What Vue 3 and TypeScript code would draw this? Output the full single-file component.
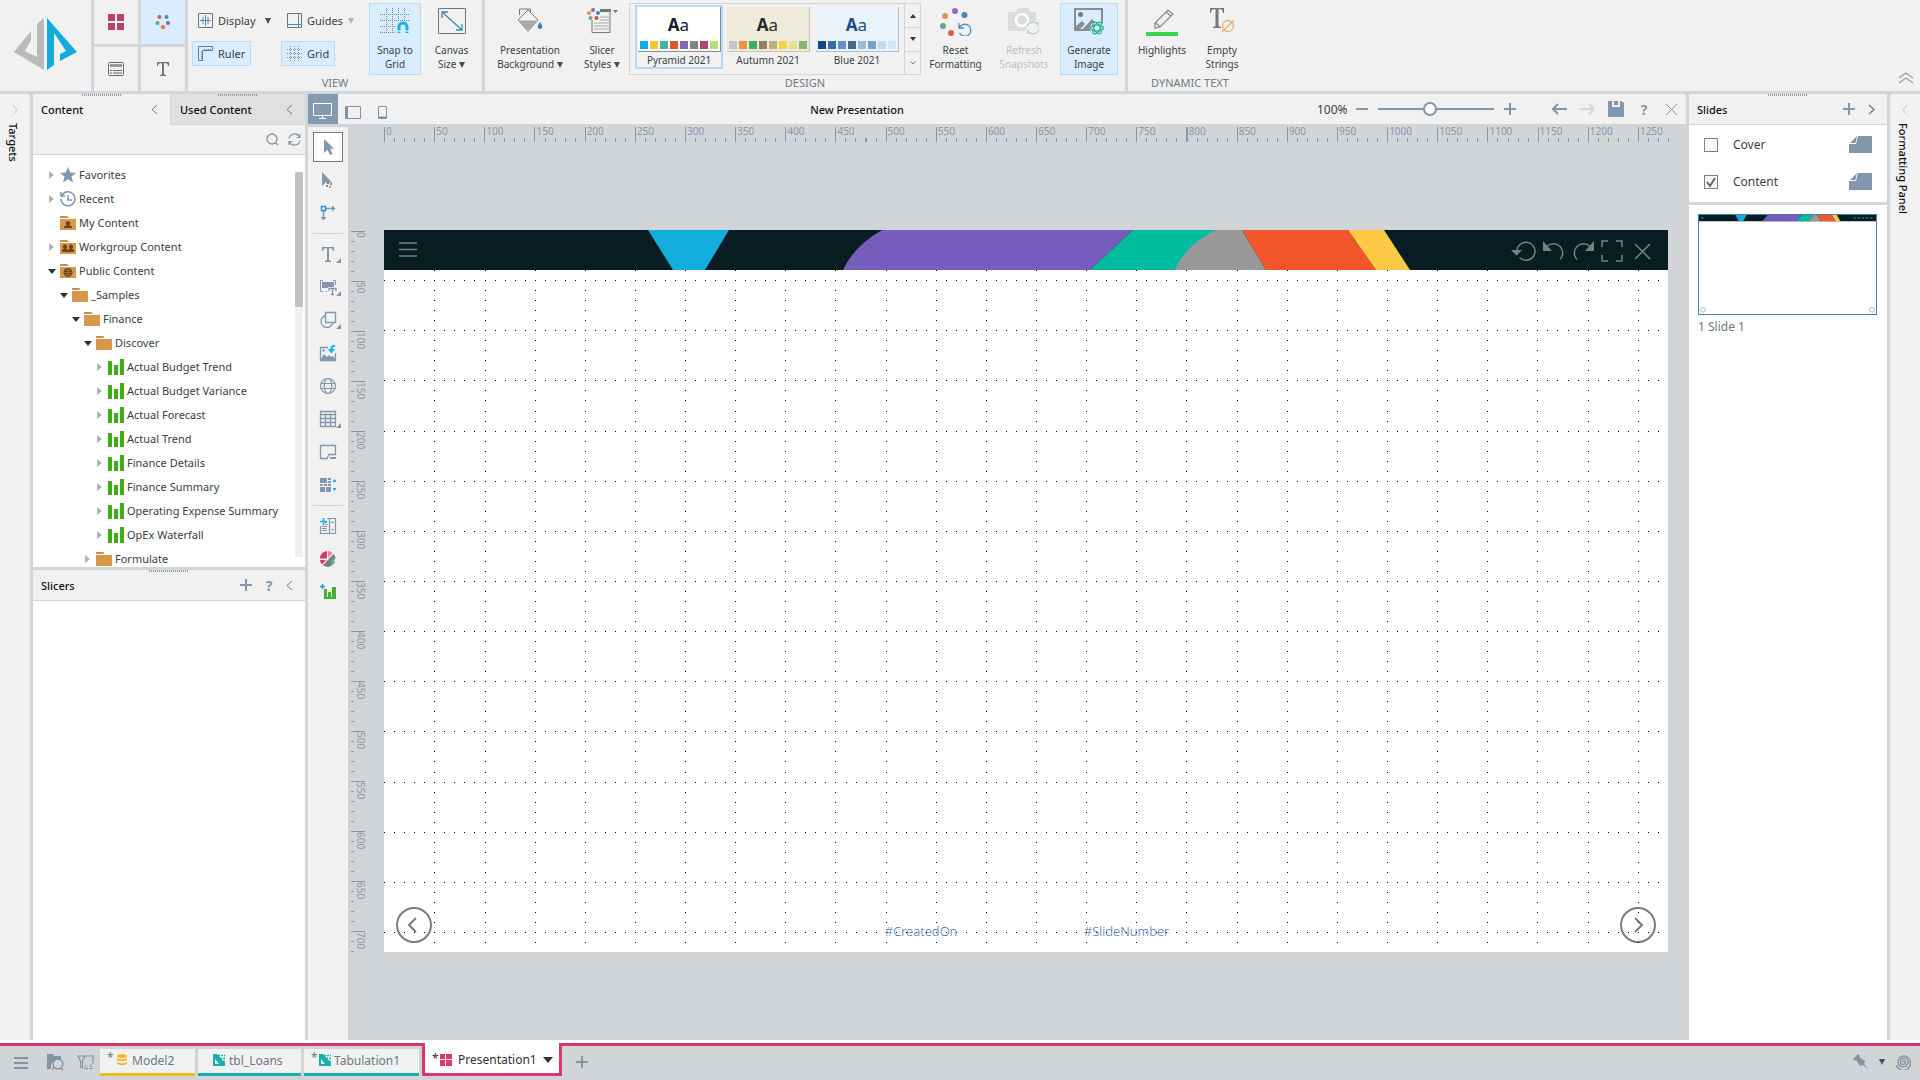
<script setup lang="ts">
import { ref } from 'vue'

interface TreeNode { label: string; level: number; icon: string; state: 'expanded' | 'closed' | 'leaf' }
interface Theme { name: string; kind: string; colors: string[] }

const folder = '<path d="M0 1h7l2 2H0z" fill="#c78f4b"/><path d="M0 4h16v11H0z" fill="#d6994b"/>'
const icons: Record<string, string> = {
  star: '<path d="M8 0l2.200 5.600 5.800.300-4.500 3.700L13 15.500 8 12.300 3 15.500l1.500-5.900L0 5.900l5.800-.300z" fill="#8297ab"/>',
  recent: '<path d="M2 4.200A7 7 0 1 1 1 8M1 1v4h4M8 4v5h4" fill="none" stroke="#8297ab" stroke-width="1.500"/>',
  folder,
  mine: folder + '<path d="M8 6a2.200 2.200 0 0 1 1.200 4.100l2.800 1.400V13H4v-1.500l2.800-1.400A2.200 2.200 0 0 1 8 6z" fill="#70441c"/>',
  group: folder + '<path d="M5 5.500a2 2 0 0 1 1 3.800L8 11l2-1.700a2 2 0 1 1 2 0l2 1.800V13H2v-1.900l2-1.800a2 2 0 0 1 1-3.800z" fill="#70441c"/>',
  public: folder + '<circle cx="8" cy="9.500" r="4.500" fill="#70441c"/><path d="M3.500 9.500h9M8 5v9M4.500 7h7M4.500 12h7" stroke="#b07a3a" stroke-width=".7"/>',
  bars: '<path d="M0 2h4v14H0zM6 6h4v10H6zM12 0h4v16h-4z" fill="#3fae14"/>',
}

const tree: TreeNode[] = [
  { label: 'Favorites', level: 0, icon: 'star', state: 'closed' },
  { label: 'Recent', level: 0, icon: 'recent', state: 'closed' },
  { label: 'My Content', level: 0, icon: 'mine', state: 'leaf' },
  { label: 'Workgroup Content', level: 0, icon: 'group', state: 'closed' },
  { label: 'Public Content', level: 0, icon: 'public', state: 'expanded' },
  { label: '_Samples', level: 1, icon: 'folder', state: 'expanded' },
  { label: 'Finance', level: 2, icon: 'folder', state: 'expanded' },
  { label: 'Discover', level: 3, icon: 'folder', state: 'expanded' },
  ...['Actual Budget Trend', 'Actual Budget Variance', 'Actual Forecast', 'Actual Trend', 'Finance Details',
    'Finance Summary', 'Operating Expense Summary', 'OpEx Waterfall'].map(
    (label): TreeNode => ({ label, level: 4, icon: 'bars', state: 'closed' })),
  { label: 'Formulate', level: 3, icon: 'folder', state: 'closed' },
]

const themes: Theme[] = [
  { name: 'Pyramid 2021', kind: 'plain', colors: ['#13afdb', '#f6c62d', '#3fb79b', '#e0552f', '#8069b8', '#838383', '#b3486f', '#b8dc7c'] },
  { name: 'Autumn 2021', kind: 'sand', colors: ['#c4c4c4', '#ef9140', '#34b557', '#8f8163', '#bdae7d', '#fdd23e', '#e8df97', '#85b86c'] },
  { name: 'Blue 2021', kind: 'sky', colors: ['#104a80', '#3571a8', '#6190c9', '#46698d', '#a1bada', '#72a5cd', '#c2d8eb', '#d3e5ef'] },
]

const corner = '<path d="M28 19v5h-5z" fill="#8297ab"/>'
const tools: { name: string; art: string; rule?: boolean }[] = [
  { name: 'Select', art: '<path d="M11 7v14l3.500-3.200L17 23l2.500-1-2.400-5.200H21z" fill="#8297ab"/>' },
  { name: 'Select content', art: '<path d="M9 7v14l3.500-3.500H19z" fill="#8297ab"/><path d="M14 17h2v2h-2z" fill="#d9534f"/><path d="M17 18h2v2h-2z" fill="#8297ab"/><path d="M13 20h2v2h-2z" fill="#20b598"/><path d="M16 21h2v2h-2z" fill="#d6994b"/>' },
  { name: 'Connector', rule: true, art: '<path d="M13 10.500h8M10.500 13v8" stroke="#8297ab" stroke-width="1.500"/><path d="M19 7.500l3.500 3-3.500 3zM7.500 19l3 3.500 3-3.500z" fill="#8297ab"/><path d="M8.500 8.500h4v4h-4z" fill="#fff" stroke="#2f8fc4" stroke-width="1.500"/>' },
  { name: 'Text', art: '<path d="M9 8h12v4h-1c-.2-2-.8-2.800-2.500-2.800H16V20c0 1.500.5 1.700 2 1.800V23h-6v-1.200c1.500 0 2-.3 2-1.800V9.200h-1.500C10.800 9.200 10.200 10 10 12H9z" fill="#8297ab"/>' + corner },
  { name: 'Dynamic text', art: '<path d="M10 8.500H7.500v11H10M20 8.500h2.500V13M14 19.500h-1" fill="none" stroke="#8297ab"/><path d="M9 10h12v5h-6v1H9z" fill="#8297ab"/><path d="M16 19v-2.500h7V19M19.500 16.500v6M18 22.500h3" fill="none" stroke="#8297ab" stroke-width="1.300"/>' + corner },
  { name: 'Shape', art: '<circle cx="14" cy="16.500" r="6" fill="none" stroke="#8297ab" stroke-width="1.300"/><path d="M12.500 7.500h10v10h-10z" fill="#f1f1f1" stroke="#8297ab" stroke-width="1.300"/>' + corner },
  { name: 'Image', art: '<path d="M15 9.500H7.500v13h15V15" fill="none" stroke="#8297ab" stroke-width="1.300"/><circle cx="10.500" cy="12.500" r="1.200" fill="#8297ab"/><path d="M8 21l3-5 3 3 2-2 2 2 2-1 3 4H8z" fill="#8297ab"/><path d="M22 7h-1.500C18.500 7 17.500 8.500 17.500 11H15l3.500 4.500L22 11h-2.500c0-1.500.5-2 2.500-2z" fill="#0fb2ee"/>' },
  { name: 'Web', art: '<g fill="none" stroke="#8297ab" stroke-width="1.200"><circle cx="15" cy="15" r="7.500"/><ellipse cx="15" cy="15" rx="3.800" ry="7.500"/><path d="M8 12.500h14M8 17.500h14"/></g>' },
  { name: 'Table', art: '<path d="M7.500 7.500h15v15h-15zM7.500 10.500h15M7.500 14.500h15M7.500 18.500h15M12.500 10.500v12M17.500 10.500v12" fill="none" stroke="#8297ab" stroke-width="1.300"/>' + corner },
  { name: 'Panel', art: '<path d="M15 21.500H7.500v-13h15v9h-6.500l-2 4" fill="none" stroke="#8297ab" stroke-width="1.300"/><path d="M17 20h6v2h-6z" fill="#8297ab"/>' },
  { name: 'Layout list', rule: true, art: '<path d="M7 8h7v5H7zM15 8h3v2h-3zM15 11h3v2h-3zM7 14h3v2H7zM11 14h3v2h-3zM15 14h3v2h-3zM7 17h5v5H7zM13 17h5v5h-5z" fill="#8297ab"/><path d="M19.500 12L21.500 9l2 3zM19.500 18l2 3 2-3z" fill="#0fa9e6"/>' },
  { name: 'Add slicer', art: '<path d="M14 7.500h8.500v15h-15V15M16.500 8v14M9 15.500h5M9 17.500h5M9 19.500h5M12 13.500h2M12 11.500h2" fill="none" stroke="#8297ab" stroke-width="1.200"/><path d="M18 12l1.500-2 1.500 2zM18 18l1.500 2 1.500-2z" fill="#8297ab"/><path d="M7 10.500h7M10.500 7v7" stroke="#0fb2ee" stroke-width="1.500"/>' },
  { name: 'Illustration', art: '<path d="M14 7v7.500H7A7.500 7.500 0 0 1 14 7zM7 16h6l-4 4.500A7 7 0 0 1 7 16z" fill="#d6336c"/><path d="M15 7a7 7 0 0 1 4.500 2L15 14z" fill="#eb7fa6"/><path d="M20.500 10a7 7 0 0 1 2 4L18 22a7 7 0 0 1-8-1z" fill="#7d7d7d"/><path d="M20 14l-3 5h2.500l-1 3.500 4-5H20l2.500-3.500z" fill="#4fb391"/>' },
  { name: 'Add visual', art: '<path d="M11 12h3v10h-3zM15 15h3v7h-3zM19 10h4v12h-4z" fill="#45ad34"/><path d="M11 20h11v2H11z" fill="#45ad34"/><path d="M7 9.500h5M9.500 7v5" stroke="#0f9fe0" stroke-width="1.500"/>' },
]

const WIDTH = 1280
const HEIGHT = 720
const every = (step: number, from: number, to: number): number[] =>
  Array.from({ length: Math.floor((to - from) / step) + 1 }, (_, i) => from + i * step)
const majorX = every(50, 0, WIDTH - 30)
const majorY = every(50, 0, HEIGHT - 20)
const minorX = every(10, 0, WIDTH).filter(v => v % 50 !== 0)
const minorY = every(10, 0, HEIGHT).filter(v => v % 50 !== 0)

const dot = (x: number, y: number): string => `M${x} ${y}h1v1h-1z`
const dots = [
  ...majorY.slice(1).flatMap(y => every(10, 0, WIDTH - 10).map(x => dot(x, y))),
  ...majorX.slice(1).flatMap(x => every(10, 40, HEIGHT - 10).filter(y => y % 50 !== 0).map(y => dot(x, y))),
].join('')

const zoom = ref(44)
const cover = ref(false)
const content = ref(true)
</script>

<template>
  <div class="app">
    <header class="ribbon">
      <div class="logo">
        <svg width="64" height="52" viewBox="0 0 64 52" aria-label="Logo">
          <path d="M30 0v52L0 34l17-21v9L11 33l12 6V6z" fill="#bababa" />
          <path d="M33 0l30 34-17 9v-7l6-3-12-18v32l-7 5z" fill="#14addb" />
        </svg>
      </div>
      <nav class="modes">
        <button class="mode" aria-label="Present">
          <svg width="16" height="16"><path d="M0 0h7v7H0zM9 0h7v7H9zM0 9h7v7H0zM9 9h7v7H9z" fill="#bb4168" /></svg>
        </button>
        <button class="mode on" aria-label="Design">
          <svg width="16" height="16"><circle cx="4.500" cy="3" r="2" fill="#df5b3c" /><circle cx="11.500" cy="3" r="2" fill="#3a8fc4" /><circle cx="2.500" cy="9" r="2" fill="#4ba99b" /><circle cx="13" cy="9" r="2" fill="#8360b0" /><circle cx="8" cy="13" r="2.200" fill="#e0844a" /></svg>
        </button>
        <button class="mode" aria-label="Properties">
          <svg width="16" height="14" fill="none" stroke="#6b6b6b"><rect x=".5" y=".5" width="15" height="13" rx="1" /><path d="M2 3.500h12" stroke="#999" stroke-width="3" /><path d="M2 8.500h2M5 8.500h9M2 11h2M5 11h9" /></svg>
        </button>
        <button class="mode" aria-label="Text">
          <svg width="12" height="14"><path d="M0 0h12v4h-1c-.3-2-.8-2.700-2.300-2.700H7V11c0 1.500.5 1.800 2 1.900V14H3v-1.100c1.500-.1 2-.4 2-1.900V1.300H3.300C1.800 1.300 1.300 2 1 4H0z" fill="#777" /></svg>
        </button>
      </nav>

      <section class="group">
        <div class="group-row view-row">
          <div class="toggles">
            <button class="small">
              <svg width="15" height="15" fill="none"><path d="M.5.500h14v14H.5z" stroke="#747474" /><path d="M7.500 2v11M2 7.500h11M5 4v7M10 4v7" stroke="#4a90bd" /></svg>
              Display <i class="caret gap"></i>
            </button>
            <button class="small">
              <svg width="15" height="15" fill="none"><path d="M.5.500h14v14H.5z" stroke="#747474" /><path d="M11.500 0v15M0 11.500h15" stroke="#4a90bd" /></svg>
              Guides <i class="caret dim"></i>
            </button>
            <button class="small on">
              <svg width="15" height="15" fill="none" stroke="#4f87ab"><path d="M.5 14.500V.5h14v4h-10v10z" /><path d="M3 12.500h2M3 10.500h2M3 8.500h2M3 6.500h2M6.500 3v2M8.500 3v2M10.500 3v2M12.500 3v2" /></svg>
              Ruler
            </button>
            <button class="small on">
              <svg width="15" height="15" fill="none" stroke="#8a8f99" stroke-dasharray="1 1"><path d="M0 3.500h15M0 7.500h15M0 11.500h15M3.500 0v15M7.500 0v15M11.500 0v15" /></svg>
              Grid
            </button>
          </div>
          <button class="big snap on">
            <svg width="30" height="26"><path d="M0 6.500h30M0 12.500h30M0 18.500h16M0 24.500h16M6.500 0v26M12.500 0v26M18.500 0v12M24.500 0v12" stroke="#6b8299" stroke-dasharray="1 1" fill="none" /><path d="M19 25v-6a4 4 0 0 1 8 0v6" fill="none" stroke="#0fb2f5" stroke-width="3" /><path d="M17 23h4M25 23h4" stroke="#fff" /></svg>
            <span>Snap to<br>Grid</span>
          </button>
          <button class="big size">
            <svg width="28" height="26" fill="none"><path d="M.5.500h27v25H.5z" stroke="#747474" /><path d="M4 4l20 18M4 10V4h6M24 16v6h-6" stroke="#3e8ab5" stroke-width="1.300" /></svg>
            <span>Canvas<br>Size <i class="caret"></i></span>
          </button>
        </div>
        <h2>VIEW</h2>
      </section>

      <section class="group">
        <div class="group-row design-row">
          <button class="big background">
            <svg width="28" height="26"><path d="M12 2l10 10-10 11L2 12z" fill="none" stroke="#777" /><path d="M2 12.500h20L12 24z" fill="#a9a9a9" /><path d="M3.500 7V1h11v3" fill="none" stroke="#777" /><path d="M24 14c3 4 3 7 0 7s-3-3 0-7z" fill="#2e86bb" /></svg>
            <span>Presentation<br>Background <i class="caret"></i></span>
          </button>
          <button class="big slicer">
            <svg width="32" height="26"><path d="M6 12v12.500h18V2h-8" fill="none" stroke="#777" /><path d="M14 1h11v3H14z" fill="#777" /><path d="M14 9h9M14 12h9M8 15h15M8 18h15M8 21h15" stroke="#aaa" /><path d="M27 2h5l-2.500 3z" fill="#777" /><circle cx="7" cy="2" r="2" fill="#8b62b5" /><circle cx="3" cy="5" r="2" fill="#e0924f" /><circle cx="12" cy="5" r="2" fill="#3a86bd" /><circle cx="4.500" cy="10" r="2" fill="#71a094" /><circle cx="10.500" cy="10" r="2" fill="#d9532f" /></svg>
            <span>Slicer<br>Styles <i class="caret"></i></span>
          </button>
          <div class="gallery">
            <button v-for="(theme, i) in themes" :key="theme.name" class="theme" :class="[theme.kind, { chosen: i === 0 }]">
              <span class="preview">
                <span class="aa"><b>A</b>a</span>
                <span class="swatches"><i v-for="c in theme.colors" :key="c" :style="{ background: c }"></i></span>
              </span>
              <span>{{ theme.name }}</span>
            </button>
            <div class="spin">
              <button aria-label="Previous themes"><i class="up"></i></button>
              <button aria-label="Next themes"><i class="down"></i></button>
              <button aria-label="All themes"><svg width="6" height="4"><path d="M.5.500L3 3 5.500.5" fill="none" stroke="#777" /></svg></button>
            </div>
          </div>
          <button class="big reset">
            <svg width="32" height="30"><circle cx="15" cy="3" r="3" fill="#9467b8" /><circle cx="5" cy="8" r="3" fill="#e0924f" /><circle cx="24.500" cy="7" r="3" fill="#4a83b8" /><circle cx="3" cy="18" r="3" fill="#71a094" /><circle cx="11" cy="25" r="3" fill="#d6653f" /><path d="M19 15v5h5M19.500 19.500a6 6 0 1 1 0 5.500" fill="none" stroke="#3e8fc9" stroke-width="1.300" /></svg>
            <span>Reset<br>Formatting</span>
          </button>
          <button class="big refresh" disabled>
            <svg width="32" height="28"><path d="M0 4h8l2-4h10l2 4h6v19H0z" fill="#dcdcdc" /><circle cx="14" cy="12" r="6" fill="#dcdcdc" stroke="#fff" stroke-width="2.500" /><circle cx="25" cy="20" r="7" fill="#f1f1f1" /><path d="M19 19a6 6 0 0 1 11-2v-3M31 21a6 6 0 0 1-11 2v3" fill="none" stroke="#b9cdd6" stroke-width="1.300" /></svg>
            <span>Refresh<br>Snapshots</span>
          </button>
          <button class="big generate on">
            <svg width="30" height="28"><path d="M1 1h27v21H1z" fill="none" stroke="#6f6f6f" stroke-width="1.500" /><circle cx="6.500" cy="6.500" r="2.500" fill="#777" /><path d="M1 22v-3l7-6 3 3-6 6zM8 22L18 11l3 3-7 8z" fill="#8b8b8b" /><circle cx="23" cy="20" r="7" fill="#dceefe" /><g fill="none" stroke="#1fae92" stroke-width="1.200"><ellipse cx="23" cy="20" rx="6.500" ry="3.200" /><ellipse cx="23" cy="20" rx="6.500" ry="3.200" transform="rotate(60 23 20)" /><ellipse cx="23" cy="20" rx="6.500" ry="3.200" transform="rotate(120 23 20)" /></g></svg>
            <span>Generate<br>Image</span>
          </button>
        </div>
        <h2>DESIGN</h2>
      </section>

      <section class="group last">
        <div class="group-row">
          <button class="big text">
            <svg width="32" height="28"><path d="M9 20v-5L22 2l5 4-13 13zM20 4l5 4M10 15l4 4" fill="none" stroke="#888" stroke-width="1.200" /><path d="M0 24h32v4H0z" fill="#3cd552" /></svg>
            <span>Highlights</span>
          </button>
          <button class="big text">
            <svg width="26" height="26"><path d="M1 0h14v5h-1c-.3-2.500-1-3.700-2.800-3.700H9.500V17c0 1.500.6 1.900 2.500 2v1H4v-1c1.900-.1 2.500-.5 2.500-2V1.300H4.800C3 1.300 2.300 2.500 2 5H1z" fill="#777" /><circle cx="19" cy="18" r="5.500" fill="none" stroke="#e8b06c" stroke-width="1.300" /><path d="M13 24L25 12" stroke="#e8b06c" stroke-width="1.300" /></svg>
            <span>Empty<br>Strings</span>
          </button>
        </div>
        <h2>DYNAMIC TEXT</h2>
      </section>
      <button class="collapse" aria-label="Collapse ribbon">
        <svg width="16" height="12"><path d="M1 6l7-5 7 5M1 11l7-5 7 5" fill="none" stroke="#9a9a9a" stroke-width="1.200" /></svg>
      </button>
    </header>

    <main class="workspace">
      <aside class="strip">
        <svg width="6" height="12"><path d="M1 1l4 5-4 5" fill="none" stroke="#c6c6c6" /></svg>
        <span>Targets</span>
      </aside>

      <div class="left">
        <section class="content-panel">
          <div class="tabs">
            <div class="tab current">
              <i class="grip"></i>Content
              <button aria-label="Collapse content"><svg width="7" height="11"><path d="M6 1L1 5.500 6 10" fill="none" stroke="#6c7a88" /></svg></button>
            </div>
            <div class="tab">
              <i class="grip"></i>Used Content
              <button aria-label="Collapse used content"><svg width="7" height="11"><path d="M6 1L1 5.500 6 10" fill="none" stroke="#6c7a88" /></svg></button>
            </div>
          </div>
          <div class="search">
            <button aria-label="Search"><svg width="13" height="13" fill="none" stroke="#8297ab" stroke-width="1.300"><circle cx="6" cy="6" r="5" /><path d="M9.500 10l2.500 2" /></svg></button>
            <button aria-label="Refresh"><svg width="13" height="13" fill="none" stroke="#8297ab" stroke-width="1.200"><path d="M1 5.500a5.600 5.600 0 0 1 10.500-1.500M12 1v3.500H8.500M12 7.500A5.600 5.600 0 0 1 1.500 9M1 12V8.500h3.500" /></svg></button>
          </div>
          <div class="tree">
            <ul>
              <li v-for="node in tree" :key="node.label" :style="{ paddingLeft: node.level * 12 + 'px' }">
                <i class="twist" :class="node.state"></i>
                <svg width="16" height="16" viewBox="0 0 16 16" v-html="icons[node.icon]"></svg>
                <span>{{ node.label }}</span>
              </li>
            </ul>
            <div class="scroll"><i></i></div>
          </div>
        </section>
        <section class="slicers">
          <div class="panel-head">
            <i class="grip"></i>
            <h3>Slicers</h3>
            <button aria-label="Add slicer"><svg width="12" height="12"><path d="M0 6h12M6 0v12" stroke="#8297ab" stroke-width="2" /></svg></button>
            <button class="help" aria-label="Help">?</button>
            <button aria-label="Collapse slicers"><svg width="7" height="11"><path d="M6 1L1 5.500 6 10" fill="none" stroke="#6c7a88" /></svg></button>
          </div>
        </section>
      </div>

      <section class="center">
        <div class="doc-head">
          <div class="devices">
            <button class="active" aria-label="Desktop"><svg width="20" height="16" fill="none" stroke="#fff"><path d="M.5.500h18v12H.5zM9.500 13v2.500M6 15.500h7" /></svg></button>
            <button aria-label="Tablet"><svg width="16" height="13" fill="none" stroke="#7f93a8"><path d="M.5.500h15v12H.5zM2.500.5v12" /><path d="M1.500 1v11" stroke-width="2" /></svg></button>
            <button aria-label="Phone"><svg width="9" height="13" fill="none" stroke="#7f93a8"><path d="M.5.500h8v12h-8z" /><path d="M0 11.500h9" stroke-width="2" /></svg></button>
          </div>
          <h1>New Presentation</h1>
          <div class="doc-tools">
            <span class="percent">100%</span>
            <button aria-label="Zoom out"><svg width="12" height="12"><path d="M0 6h12" stroke="#8297ab" stroke-width="2" /></svg></button>
            <input v-model="zoom" type="range" min="0" max="100" aria-label="Zoom">
            <button aria-label="Zoom in"><svg width="12" height="12"><path d="M0 6h12M6 0v12" stroke="#8297ab" stroke-width="2" /></svg></button>
            <button class="back" aria-label="Undo"><svg width="15" height="12"><path d="M15 6H2M6 1L1 6l5 5" fill="none" stroke="#8297ab" stroke-width="2" /></svg></button>
            <button class="step" aria-label="Redo"><svg width="15" height="12"><path d="M0 6h13M9 1l5 5-5 5" fill="none" stroke="#d3d8dc" stroke-width="2" /></svg></button>
            <button class="step" aria-label="Save"><svg width="16" height="16"><path d="M0 0h4v6h8V0h1l3 2v14H0zM6 0h4v4H6z" fill="#8297ab" fill-rule="evenodd" /></svg></button>
            <button class="help" aria-label="Help">?</button>
            <button class="close" aria-label="Close"><svg width="13" height="13"><path d="M1 1l11 11M12 1L1 12" stroke="#8297ab" /></svg></button>
          </div>
        </div>

        <div class="editor">
          <div class="toolbar">
            <template v-for="(tool, i) in tools" :key="tool.name">
              <button :class="{ picked: i === 0 }" :aria-label="tool.name"><svg width="30" height="30" viewBox="0 0 30 30" v-html="tool.art"></svg></button>
              <hr v-if="tool.rule">
            </template>
          </div>

          <div class="stage">
            <svg class="ruler-x" :viewBox="`0 0 ${WIDTH} 15`">
              <path :d="majorX.map(x => `M${x} 0h1v15h-1z`).join('')" fill="#8497ab" shape-rendering="crispEdges" />
              <path :d="minorX.map(x => `M${x} 11h1v4h-1z`).join('')" fill="#8c97a1" shape-rendering="crispEdges" />
              <text v-for="x in majorX" :key="x" :x="x + 2" y="8">{{ x }}</text>
            </svg>
            <div class="board">
              <svg class="ruler-y" :viewBox="`0 0 14 ${HEIGHT}`">
                <path :d="majorY.map(y => `M0 ${y}h14v1H0z`).join('')" fill="#8497ab" shape-rendering="crispEdges" />
                <path :d="minorY.map(y => `M0 ${y}h3v1H0z`).join('')" fill="#8c97a1" shape-rendering="crispEdges" />
                <text v-for="y in majorY" :key="y" :transform="`translate(6 ${y + 1}) rotate(90)`">{{ y }}</text>
              </svg>
              <div class="canvas">
                <div class="band">
                  <svg class="art" viewBox="0 0 1284 40" preserveAspectRatio="none">
                    <path d="M264 0h81l-24 40h-32z" fill="#11aedd" />
                    <path d="M498 0h251l-43 40H459Q470 16 498 0z" fill="#765cbd" />
                    <path d="M749 0h83l-41 40h-85z" fill="#00bc9f" />
                    <path d="M832 0h26l24 40h-91Q802 14 832 0z" fill="#989898" />
                    <path d="M858 0h106l28 40H882z" fill="#f2562b" />
                    <path d="M964 0h36l26 40h-34z" fill="#fdc945" />
                  </svg>
                  <button aria-label="Menu"><svg width="18" height="15"><path d="M0 1h18M0 7.500h18M0 14h18" stroke="#718488" stroke-width="1.500" /></svg></button>
                  <span class="band-actions">
                    <button aria-label="Reset"><svg width="25" height="22" fill="none" stroke="#718488" stroke-width="1.500"><path d="M6 12a9 9 0 1 1 2.500 5.500" /><path d="M0 10h11l-5.500 5.500z" fill="#718488" stroke="none" /></svg></button>
                    <button aria-label="Undo"><svg width="22" height="22" fill="none" stroke="#718488" stroke-width="1.500"><path d="M4 6.500a9 9 0 0 1 13 13" /><path d="M0 1v10h9z" fill="#718488" stroke="none" /></svg></button>
                    <button aria-label="Redo"><svg width="22" height="22" fill="none" stroke="#718488" stroke-width="1.500"><path d="M18 6.500a9 9 0 0 0-13 13" /><path d="M22 1v10h-9z" fill="#718488" stroke="none" /></svg></button>
                    <button aria-label="Full screen"><svg width="22" height="22" fill="none" stroke="#718488" stroke-width="1.500"><path d="M1 7V1h6M15 1h6v6M21 15v6h-6M7 21H1v-6" /></svg></button>
                    <button class="exit" aria-label="Exit"><svg width="17" height="17" stroke="#718488" stroke-width="1.500"><path d="M1 1l15 15M16 1L1 16" /></svg></button>
                  </span>
                </div>
                <button class="turn prev" aria-label="Previous slide"><svg width="36" height="36" fill="none" stroke="#7b7b7b" stroke-width="2"><circle cx="18" cy="18" r="17" /><path d="M20 11l-7 7 7 7" /></svg></button>
                <span class="field created">#CreatedOn</span>
                <span class="field number">#SlideNumber</span>
                <button class="turn next" aria-label="Next slide"><svg width="36" height="36" fill="none" stroke="#7b7b7b" stroke-width="2"><circle cx="18" cy="18" r="17" /><path d="M15 11l7 7-7 7" /></svg></button>
                <svg class="grid" :viewBox="`0 0 ${WIDTH} ${HEIGHT}`"><path :d="dots" fill="#000" shape-rendering="crispEdges" /></svg>
              </div>
            </div>
          </div>
        </div>
      </section>

      <section class="slides">
        <div class="panel-head">
          <i class="grip"></i>
          <h3>Slides</h3>
          <button aria-label="Add slide"><svg width="12" height="12"><path d="M0 6h12M6 0v12" stroke="#8297ab" stroke-width="2" /></svg></button>
          <button aria-label="Collapse slides"><svg width="7" height="11"><path d="M1 1l5 4.500L1 10" fill="none" stroke="#6c7a88" stroke-width="1.300" /></svg></button>
        </div>
        <div class="masters">
          <div class="master">
            <input id="cover" v-model="cover" type="checkbox"><label for="cover">Cover</label>
            <svg width="23" height="17"><path d="M9 0h14v17H0V8h7z" fill="#8297ab" /><path d="M1 7l7-7-1.500 7z" fill="#8297ab" /></svg>
          </div>
          <div class="master">
            <input id="content" v-model="content" type="checkbox"><label for="content">Content</label>
            <svg width="23" height="17"><path d="M9 0h14v17H0V8h7z" fill="#8297ab" /><path d="M1 7l7-7-1.500 7z" fill="#8297ab" /></svg>
          </div>
        </div>
        <div class="deck">
          <button class="thumb" aria-label="Slide 1">
            <svg viewBox="0 0 1284 726" preserveAspectRatio="none">
              <path d="M0 0h1284v45H0z" fill="#071d21" />
              <path d="M264 0h81l-24 45h-32z" fill="#11aedd" /><path d="M498 0h251l-43 45H459z" fill="#765cbd" /><path d="M749 0h83l-41 45h-85z" fill="#00bc9f" /><path d="M832 0h26l24 45h-91z" fill="#989898" /><path d="M858 0h106l28 45H882z" fill="#f2562b" /><path d="M964 0h36l26 45h-34z" fill="#fdc945" />
              <path d="M15 22h18M1120 22h150" stroke="#4b6064" stroke-width="12" stroke-dasharray="18 12" />
              <g fill="none" stroke="#aaa" stroke-width="6"><circle cx="30" cy="695" r="17" /><circle cx="1254" cy="695" r="17" /></g>
            </svg>
          </button>
          <span>1 Slide 1</span>
        </div>
      </section>

      <aside class="strip right">
        <svg width="6" height="12"><path d="M5 1L1 6l4 5" fill="none" stroke="#c6c6c6" /></svg>
        <span>Formatting Panel</span>
      </aside>
    </main>

    <footer class="taskbar">
      <div class="task-icons">
        <button aria-label="Menu"><svg width="14" height="12"><path d="M0 1h14M0 6h14M0 11h14" stroke="#8594a3" stroke-width="2" /></svg></button>
        <button aria-label="Browse"><svg width="17" height="17"><path d="M0 0h6l1 2h7v4H8l-4 4v5H0z" fill="#8594a3" /><circle cx="11" cy="10" r="5" fill="none" stroke="#8594a3" stroke-width="1.300" /><path d="M7 13l-2 3M14 14l2 2" stroke="#8594a3" stroke-width="1.300" /></svg></button>
        <button aria-label="Filter"><svg width="17" height="15" fill="none" stroke="#8594a3" stroke-width="1.200"><path d="M9 1h7v8M1 1h7L5.500 6v7l-2-1V6zM7 13.500h4M12 13.500h4M8 11h2M14 9v3" /></svg></button>
      </div>
      <a href="#" class="doc gold"><b>*</b><svg width="10" height="12" fill="#f2b824"><ellipse cx="5" cy="2" rx="5" ry="2" /><path d="M0 4q5 2.500 10 0v2q-5 2.500-10 0zM0 8q5 2.500 10 0v2q-5 2.500-10 0z" /></svg>Model2</a>
      <a href="#" class="doc loans"><svg width="12" height="12"><path d="M0 0h4l8 9v3H0z" fill="#16b1a8" /><path d="M2 5v5h4z" fill="#f1f1f1" /><path d="M5 1.500h7M7 4.500h5M10 7.500h2" stroke="#16b1a8" stroke-width="1.500" stroke-dasharray="2 1" /></svg>tbl_Loans</a>
      <a href="#" class="doc tabulation"><b>*</b><svg width="12" height="12"><path d="M0 0h4l8 9v3H0z" fill="#16b1a8" /><path d="M2 5v5h4z" fill="#f1f1f1" /><path d="M5 1.500h7M7 4.500h5M10 7.500h2" stroke="#16b1a8" stroke-width="1.500" stroke-dasharray="2 1" /></svg>Tabulation1</a>
      <a href="#" class="doc front"><b>*</b><svg width="12" height="12"><path d="M0 0h5v5H0zM6 0h6v5H6zM0 6h5v6H0zM6 6h6v6H6z" fill="#d9386b" /></svg>Presentation1<i class="caret large"></i></a>
      <button class="new-doc" aria-label="New document"><svg width="12" height="12"><path d="M0 6h12M6 0v12" stroke="#8594a3" stroke-width="2" /></svg></button>
      <span class="status">
        <button aria-label="Pin"><svg width="16" height="16"><path d="M0 5l5-5 2 2-1 1 6 4-1 3 5 6-6-5-3 1-4-6-1 1z" fill="#8594a3" /></svg></button>
        <i class="caret"></i>
        <button aria-label="Activity"><svg width="16" height="16" fill="none" stroke="#8594a3" stroke-width="1.500"><path d="M8 8A1.250 1.250 0 0 1 10.500 8A2.500 2.500 0 0 1 5.500 8A3.750 3.750 0 0 1 13 8A5 5 0 0 1 3 8A6.100 6.100 0 0 1 15.200 8A7 7 0 0 1 1.500 11" /></svg></button>
      </span>
    </footer>
  </div>
</template>

<style>
body { margin: 0; background: #d1d5d8; }
</style>

<style scoped>
* { box-sizing: border-box; }
.app { display: flex; flex-direction: column; min-height: 100vh; font-family: "Noto Sans", "Open Sans", sans-serif; font-size: 11px; color: #3a4147; background: #d1d5d8; }
button { display: flex; align-items: center; justify-content: center; margin: 0; padding: 0; border: 0; background: none; font: inherit; color: inherit; }
svg { display: block; flex: none; }
h1, h2, h3, ul { margin: 0; padding: 0; }
.caret { display: inline-block; border: 3px solid transparent; border-top: 6px solid #454c55; border-bottom: 0; }
.caret.dim { border-top-color: #b5b5b5; }
.caret.large { border-width: 6px 5px 0; }
.up { border: 3px solid transparent; border-bottom: 4px solid #333; border-top: 0; }
.down { border: 3px solid transparent; border-top: 4px solid #333; border-bottom: 0; }

.ribbon { display: flex; height: 94px; border-bottom: 3px solid #d3d6d8; background: #f1f1f1; }
.logo { display: flex; align-items: center; justify-content: center; width: 91px; padding-bottom: 3px; }
.modes { display: grid; grid-template: 44px 44px / 44px 44px; gap: 3px; padding: 0 3px; background: #d3d6d8; }
.mode { background: #f1f1f1; }
.mode.on { background: #d9edfe; }
.group { display: flex; flex-direction: column; padding-top: 3px; border-right: 3px solid #d3d6d8; }
.group.last { border: 0; }
.group-row { display: flex; height: 72px; padding-left: 4px; }
.design-row { padding: 0 7px 0 0; }
.group h2 { line-height: 16px; font-size: 11px; font-weight: 400; text-align: center; color: #6f7a84; }
.toggles { display: grid; grid-template: 33px 33px / 89px 88px; align-content: start; align-items: center; justify-items: start; padding-top: 1px; }
.small { gap: 5px; height: 25px; padding: 0 5px; border: 1px solid transparent; }
.small.on, .big.on { border-color: #b7dcf8; background: #d9edfe; }
.small .gap { margin-left: 4px; }
.big { flex-direction: column; justify-content: flex-start; gap: 7px; padding: 4px 0 0; border: 1px solid transparent; font-size: 10px; line-height: 14px; }
.big > svg { height: 28px; }
.big:disabled { color: #bcbfc1; }
.snap { width: 52px; }
.size { width: 61px; }
.background { width: 90px; }
.slicer { width: 54px; }
.reset { width: 69px; }
.refresh { width: 68px; margin-right: 2px; }
.generate { width: 58px; }
.text { width: 60px; }
.gallery { display: flex; gap: 1px; padding-left: 5px; border: 1px solid #d3d6d8; }
.theme { flex-direction: column; justify-content: flex-start; gap: 1px; width: 88px; height: 64px; margin-top: 1px; border: 2px solid transparent; font-size: 10px; line-height: 14px; }
.theme.chosen { border-color: #b5dafa; }
.preview { display: flex; flex-direction: column; align-items: center; justify-content: space-between; width: 83px; height: 46px; padding: 6px 3px 2px; border: solid #8c8c8c; border-width: 0 1px 1px 0; background: #fff; color: #13202f; }
.sand .preview { background: #eeebdb; border-color: #c6c4b8; color: #2a2a2a; }
.sky .preview { background: #eaf2fa; border-color: #a9bfd9; color: #174f85; }
.aa { font-size: 17px; line-height: 24px; }
.swatches { display: flex; gap: 2px; }
.swatches i { width: 8px; height: 8px; }
.spin { display: grid; grid-template-rows: 1fr 1fr 1fr; width: 16px; margin-left: 2px; border-left: 1px solid #d3d6d8; }
.spin button + button { border-top: 1px solid #d3d6d8; }
.collapse { align-self: flex-end; margin: 0 6px 7px auto; }

.workspace { display: flex; flex: 1; gap: 3px; }
.strip { display: flex; flex-direction: column; align-items: center; gap: 7px; width: 30px; padding-top: 10px; background: #f1f1f1; color: #111; }
.strip span { writing-mode: vertical-rl; margin-right: 4px; font-weight: 500; line-height: 16px; }
.left { display: flex; flex-direction: column; gap: 3px; width: 272px; }
.content-panel { height: 473px; display: flex; flex-direction: column; background: #fff; }
.tabs { display: flex; background: #f1f1f1; }
.tab { position: relative; display: flex; align-items: center; justify-content: space-between; width: 135px; height: 31px; padding: 0 12px 0 9px; border: solid #d3d6d8; border-width: 0 0 1px 1px; background: #dfe0e0; font-weight: 500; color: #111; }
.tab.current { width: 137px; padding: 0 12px 0 8px; border: 0; background: #f1f1f1; }
.grip { position: absolute; top: 0; left: 50%; width: 40px; height: 2px; margin-left: -20px; background: repeating-linear-gradient(90deg, #8f9bab 0 1px, transparent 1px 2px); }
.search { display: flex; align-items: center; justify-content: flex-end; gap: 9px; height: 30px; padding-right: 4px; border-bottom: 1px solid #d3d6d8; background: #f1f1f1; }
.tree { display: flex; flex: 1; overflow: hidden; padding: 8px 2px 0 16px; }
.tree ul { flex: 1; height: 0; list-style: none; }
.tree li { display: flex; align-items: center; height: 24px; line-height: 24px; }
.tree li svg { margin-right: 3px; }
.twist { flex: none; width: 6px; height: 8px; margin-right: 5px; }
.twist.closed { border: 4px solid transparent; border-left: 5px solid #b0b0b0; border-right: 0; }
.twist.expanded { width: 8px; height: 5px; margin: 0 4px 0 -1px; border: 4px solid transparent; border-top: 5px solid #333; border-bottom: 0; }
.scroll { width: 8px; height: 385px; margin-top: 9px; background: #f1f1f1; }
.scroll i { display: block; height: 135px; border-radius: 2px; background: #c1c1c1; }
.slicers { flex: 1; background: #fff; }
.panel-head { position: relative; display: flex; align-items: center; gap: 13px; height: 31px; padding: 0 12px 0 8px; border-bottom: 1px solid #d3d6d8; background: #f1f1f1; }
.panel-head h3 { flex: 1; font-size: 11px; font-weight: 500; color: #111; }
.panel-head .help { width: 8px; }
.help { font-size: 14px; font-weight: 700; color: #8297ab; }

.center { display: flex; flex: 1; flex-direction: column; gap: 3px; min-width: 0; }
.doc-head { display: flex; height: 30px; background: #f1f1f1; }
.devices { display: flex; width: 89px; }
.devices button { width: 30px; padding-top: 6px; }
.devices .active { padding-top: 3px; background: #849ab0; }
.doc-head h1 { flex: 1; font-size: 11px; font-weight: 500; line-height: 31px; text-align: center; color: #111; }
.doc-tools { display: flex; align-items: center; width: 369px; }
.percent { width: 39px; font-size: 12px; }
.doc-tools input { appearance: none; width: 116px; height: 14px; margin: 0 10px; background: linear-gradient(#8297ab, #8297ab) center / 100% 2px no-repeat; }
.doc-tools input::-webkit-slider-thumb { appearance: none; width: 14px; height: 14px; border: 2px solid #8297ab; border-radius: 50%; background: #fff; }
.back { margin-left: 36px; }
.step { margin-left: 13px; }
.doc-tools .help { width: 8px; margin: 0 17px 0 16px; }
.editor { display: flex; flex: 1; }
.toolbar { display: flex; flex-direction: column; align-items: center; gap: 3px; width: 40px; padding: 5px; background: #f1f1f1; }
.toolbar button { width: 30px; height: 30px; }
.toolbar .picked { background: #fff; box-shadow: inset 0 0 0 1px #6b7c8c; }
.toolbar hr { width: 30px; height: 1px; margin: 2px 0; border: 0; background: #cfd2d4; }
.stage { display: flex; flex: 1; flex-direction: column; min-width: 0; padding: 0 18px 0 3px; }
.ruler-x, .ruler-y { overflow: visible; }
.ruler-x text, .ruler-y text { font-size: 10px; fill: #8799ad; }
.ruler-x { width: auto; margin-left: 33px; }
.board { display: flex; align-items: center; flex: 1; gap: 19px; }
.ruler-y { align-self: center; width: 14px; height: auto; }
.canvas { position: relative; flex: 1; aspect-ratio: 1284 / 722; background: #fff; }
.band { position: relative; display: flex; align-items: center; justify-content: space-between; height: 40px; padding: 0 17px 2px 15px; background: #071d21; }
.art { position: absolute; inset: 0; width: 100%; height: 100%; }
.band button { position: relative; }
.band-actions { display: flex; align-items: center; gap: 7px; padding-top: 4px; }
.exit { margin-left: 4px; }
.turn { position: absolute; bottom: 9px; }
.prev { left: 12px; }
.next { right: 12px; }
.field { position: absolute; bottom: 12px; font-size: 13px; line-height: 18px; font-weight: 300; color: #3f74b3; }
.created { left: 39%; }
.number { left: 54.5%; }
.grid { position: absolute; inset: 0; width: 100%; height: 100%; pointer-events: none; }

.slides { display: flex; flex-direction: column; width: 198px; background: #fff; }
.masters { height: 80px; padding-top: 1px; border-bottom: 3px solid #d3d6d8; }
.master { display: flex; align-items: center; height: 37px; padding: 0 15px; font-size: 12px; }
.master label { flex: 1; margin-left: 15px; }
.master input { appearance: none; width: 14px; height: 14px; margin: 0; border: 1px solid #77838f; background: #f7f7f7; }
.master input:checked { background: #f7f7f7 url("data:image/svg+xml,%3Csvg xmlns='http://www.w3.org/2000/svg' width='12' height='12'%3E%3Cpath d='M2 6l3 4 5-8' fill='none' stroke='%235f6b78' stroke-width='2'/%3E%3C/svg%3E"); }
.deck { display: flex; flex-direction: column; gap: 3px; padding: 9px 10px 0 9px; font-size: 12px; color: #707880; }
.thumb { border: 1px solid #3b86ad; }
.thumb svg { width: 100%; height: 99px; }

.taskbar { display: flex; align-items: flex-start; height: 40px; border-top: 3px solid #fff; background: linear-gradient(#d9366c 3px, #d1d5d8 3px); font-size: 12px; color: #6b7883; }
.task-icons { display: flex; align-items: center; gap: 13px; width: 100px; height: 37px; padding: 2px 0 0 14px; }
.task-icons button:first-child { margin-right: 6px; }
.doc { display: flex; align-items: center; height: 27px; margin: 6px 3px 0 0; padding-bottom: 2px; border-bottom: 3px solid #16b1a8; background: #f1f1f1; color: inherit; text-decoration: none; }
.doc svg { margin-right: 4px; }
.doc b { align-self: flex-start; width: 8px; font-weight: 400; line-height: 18px; }
.gold { width: 95px; padding-left: 7px; border-color: #f2bd1d; }
.gold svg { margin: 0 5px 0 2px; }
.loans { width: 103px; padding-left: 15px; }
.tabulation { width: 115px; padding-left: 7px; }
.tabulation svg { margin-right: 3px; }
.front { width: 140px; height: 33px; margin-top: 0; padding: 3px 0 0 7px; border: 3px solid #d9366c; border-top: 0; background: #fff; color: #2a3036; }
.front svg { margin-right: 6px; }
.front b { line-height: 26px; }
.front .caret { margin-left: 6px; border-top-color: #333; }
.new-doc { height: 37px; margin-left: 11px; }
.status { display: flex; align-items: center; gap: 10px; height: 37px; margin-left: auto; padding-right: 9px; }
</style>
